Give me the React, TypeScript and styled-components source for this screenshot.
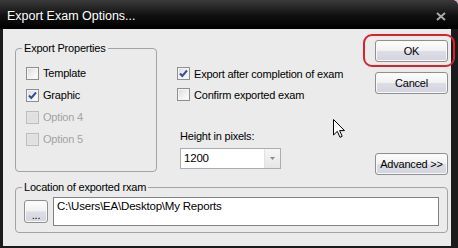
import React from 'react';
import styled, { createGlobalStyle } from 'styled-components';

const GlobalStyle = createGlobalStyle`
  html, body {
    margin: 0;
    padding: 0;
    background: #d9a9c4;
  }
  body {
    font-family: 'Liberation Sans', Arial, sans-serif;
  }
`;

type BoxProps = { checked?: boolean; disabled?: boolean };

const CheckBox: React.FC<BoxProps> = ({ checked, disabled }) => (
  <Box disabled={disabled}>
    {checked && (
      <svg width="11" height="11" viewBox="0 0 11 11">
        <path d="M2 5.5 L4.3 8 L9 2.5" fill="none" stroke="#36508f" strokeWidth="2" />
      </svg>
    )}
  </Box>
);

const Option: React.FC<BoxProps & { label: string }> = ({ label, checked, disabled }) => (
  <CheckRow disabled={disabled}>
    <CheckBox checked={checked} disabled={disabled} />
    <span>{label}</span>
  </CheckRow>
);

const App: React.FC = () => {
  return (
    <>
      <GlobalStyle />
      <Frame>
        <TitleBar>
          <Title>Export Exam Options...</Title>
          <svg width="10" height="9" viewBox="0 0 10 9">
            <path d="M1 1 L9 8 M9 1 L1 8" stroke="#a9a9a9" strokeWidth="2" />
          </svg>
        </TitleBar>
        <Body>
          <PropsGroup>
            <Caption>Export Properties</Caption>
            <Option label="Template" />
            <Option label="Graphic" checked />
            <Option label="Option 4" disabled />
            <Option label="Option 5" disabled />
          </PropsGroup>

          <Middle>
            <Option label="Export after completion of exam" checked />
            <Option label="Confirm exported exam" />
            <FieldLabel>Height in pixels:</FieldLabel>
            <Combo>
              <ComboValue>1200</ComboValue>
              <ComboButton>
                <svg width="5" height="3" viewBox="0 0 5 3">
                  <path d="M0 0 L5 0 L2.5 3 Z" fill="#8a8a8a" />
                </svg>
              </ComboButton>
            </Combo>
            <Cursor width="12" height="19" viewBox="0 0 12 19">
              <path
                d="M0.5 0.5 L0.5 16 L4.3 12.4 L7 18.3 L9.2 17.3 L6.6 11.6 L11.5 11.6 Z"
                fill="#fff"
                stroke="#000"
                strokeWidth="1"
              />
            </Cursor>
          </Middle>

          <Actions>
            <OkWrap>
              <Button>OK</Button>
              <Highlight />
            </OkWrap>
            <Button>Cancel</Button>
            <AdvancedButton>Advanced &gt;&gt;</AdvancedButton>
          </Actions>

          <LocationGroup>
            <Caption>Location of exported rxam</Caption>
            <BrowseButton>...</BrowseButton>
            <PathField>C:\Users\EA\Desktop\My Reports</PathField>
          </LocationGroup>
        </Body>
      </Frame>
    </>
  );
};

const Frame = styled.div`
  width: 458px;
  height: 248px;
  display: flex;
  flex-direction: column;
  background: #1b1b1b;
  border-top-right-radius: 6px;
  overflow: hidden;
`;

const TitleBar = styled.div`
  height: 29px;
  flex: none;
  display: flex;
  align-items: center;
  justify-content: space-between;
  padding: 3px 12px 0 7px;
  box-sizing: border-box;
  background: linear-gradient(#3a3a3a, #101010 55%, #000);
`;

const Title = styled.span`
  color: #fff;
  font-size: 12.5px;
`;

const Body = styled.div`
  flex: 1;
  margin: 0 7px 2px 3px;
  padding: 11px 3px 13px 12px;
  background: #ebebeb;
  display: grid;
  grid-template-columns: 142px 1fr 73px;
  grid-template-rows: 135px auto;
  row-gap: 12px;
  font-size: 11px;
  letter-spacing: -0.2px;
  color: #000;
`;

const Group = styled.div`
  position: relative;
  border: 1px solid #a3a3a3;
  border-radius: 4px;
  box-sizing: border-box;
`;

const Caption = styled.span`
  position: absolute;
  top: -7px;
  left: 6px;
  padding: 0 2px;
  line-height: 13px;
  background: #ebebeb;
`;

const PropsGroup = styled(Group)`
  margin-top: 8px;
  height: 124px;
  padding: 13px 0 0 10px;
  display: flex;
  flex-direction: column;
`;

const CheckRow = styled.label<{ disabled?: boolean }>`
  height: 22px;
  display: flex;
  align-items: center;
  gap: 4px;
  color: ${p => (p.disabled ? '#a3a3a3' : '#000')};
`;

const Middle = styled.div`
  position: relative;
  padding: 23px 0 0 20px;
  display: flex;
  flex-direction: column;
  align-items: flex-start;

  ${CheckRow} {
    height: 21px;
  }
`;

const Box = styled.span<{ disabled?: boolean }>`
  width: 13px;
  height: 13px;
  box-sizing: border-box;
  display: flex;
  align-items: center;
  justify-content: center;
  border: 1px solid ${p => (p.disabled ? '#bdbdbd' : '#8e8f8f')};
  background: ${p =>
    p.disabled
      ? '#e0e0e0'
      : 'linear-gradient(135deg, #d6d9de 0%, #eef0f2 50%, #ffffff 100%)'};
  box-shadow: inset 0 0 0 1px ${p => (p.disabled ? '#e4e4e4' : '#f4f4f4')};
`;

const FieldLabel = styled.span`
  margin: 25px 0 0 3px;
  line-height: 13px;
`;

const Combo = styled.div`
  margin: 5px 0 0 3px;
  width: 101px;
  height: 21px;
  box-sizing: border-box;
  border: 1px solid #abadb3;
  background: #fff;
  display: flex;
`;

const ComboValue = styled.span`
  flex: 1;
  padding-left: 3px;
  line-height: 19px;
  font-size: 11.5px;
`;

const ComboButton = styled.span`
  width: 15px;
  display: flex;
  align-items: center;
  justify-content: center;
  background: linear-gradient(#f6f6f6, #e6e6e6);
  border-left: 1px solid #e2e2e2;
`;

const Cursor = styled.svg`
  position: absolute;
  left: 176px;
  top: 79px;
`;

const Actions = styled.div`
  display: flex;
  flex-direction: column;
  gap: 10px;
`;

const OkWrap = styled.div`
  position: relative;
`;

const Button = styled.button`
  width: 73px;
  height: 22px;
  padding: 0;
  box-sizing: border-box;
  border: 1px solid #8e8f8f;
  border-radius: 3px;
  background: linear-gradient(#fdfdfd 0%, #f1f1f1 48%, #dcdde6 52%, #d3d4df 100%);
  box-shadow: inset 0 0 0 1px #f8f8f8;
  font-family: inherit;
  font-size: 11px;
  letter-spacing: -0.2px;
  color: #000;
`;

const AdvancedButton = styled(Button)`
  margin-top: auto;
  text-align: center;
`;

const Highlight = styled.span`
  position: absolute;
  left: -12px;
  top: -6px;
  width: 92px;
  height: 33px;
  box-sizing: border-box;
  border: 2px solid #d8232f;
  border-radius: 9px;
  pointer-events: none;
`;

const LocationGroup = styled(Group)`
  grid-column: 1 / -1;
  height: 46px;
  padding: 0 8px;
  display: flex;
  align-items: center;
  gap: 5px;
`;

const BrowseButton = styled(Button)`
  width: 24px;
  height: 23px;
  padding-top: 6px;
  margin-top: 3px;
`;

const PathField = styled.div`
  flex: 1;
  height: 29px;
  margin-top: 3px;
  box-sizing: border-box;
  border: 1px solid #7f8389;
  background: #fff;
  padding: 2px 3px;
  font-size: 11.5px;
`;

export default App;
